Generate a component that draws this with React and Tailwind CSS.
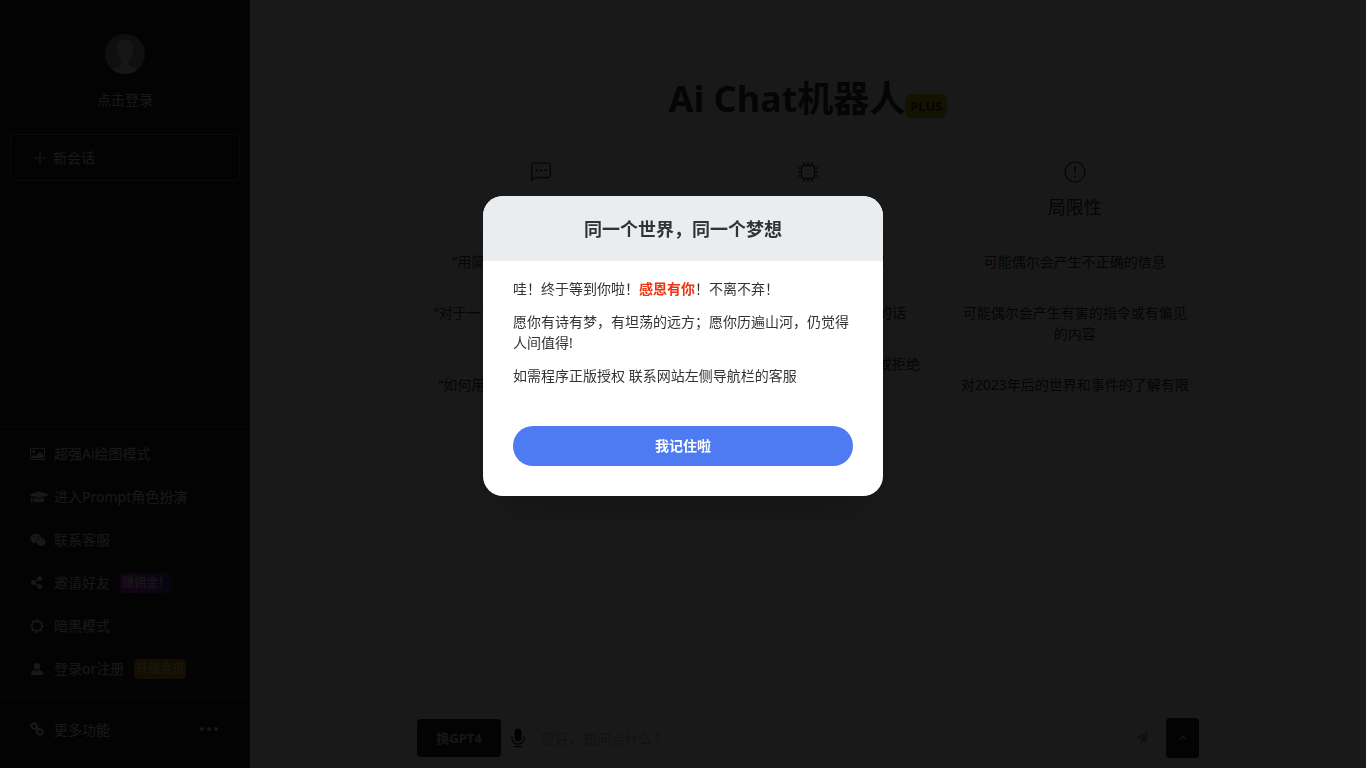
import React from "react";
import { FaGraduationCap, FaWeixin, FaShareAlt } from "react-icons/fa";

function PlusIcon() {
  return (
    <svg className="size-3 shrink-0" viewBox="0 0 12 12" fill="none" stroke="currentColor" aria-hidden="true">
      <path d="M6 0v12M0 6h12" strokeWidth="1.2" />
    </svg>
  );
}

function PictureIcon() {
  return (
    <svg className="h-3 w-[15px]" viewBox="0 0 15 12" aria-hidden="true">
      <rect x="0.5" y="0.5" width="14" height="11" fill="none" stroke="currentColor" />
      <circle cx="3.8" cy="3.6" r="1.5" fill="currentColor" />
      <path d="M2 10V8.4l2.2-1.9 1.8 1.4L10 3.6l3 3V10z" fill="currentColor" />
    </svg>
  );
}

function SunIcon() {
  return (
    <svg className="size-3.5" viewBox="0 0 14 14" fill="none" stroke="currentColor" aria-hidden="true">
      <circle cx="7" cy="7" r="4.9" strokeWidth="1.6" />
      <circle cx="7" cy="7" r="6.2" strokeWidth="1.6" strokeDasharray="1.800 3.070" strokeDashoffset="0.900" />
    </svg>
  );
}

function UserIcon() {
  return (
    <svg className="h-3 w-3.5" viewBox="0 0 14 12" fill="currentColor" aria-hidden="true">
      <circle cx="7" cy="3.2" r="3.1" />
      <path d="M1 12c0-3 1.4-4.8 3.8-5.5L7 8.6l2.2-2.1C11.6 7.2 13 9 13 12z" />
    </svg>
  );
}

function LinkIcon() {
  return (
    <svg className="size-3.5" viewBox="0 0 14 14" fill="none" stroke="currentColor" strokeWidth="2" aria-hidden="true">
      <rect x="1.2" y="1.7" width="6" height="4.8" rx="2.4" transform="rotate(45 4.2 4.1)" />
      <rect x="6.8" y="7.5" width="6" height="4.8" rx="2.4" transform="rotate(45 9.8 9.9)" />
      <path d="M5.3 5.3l3.4 3.4" />
    </svg>
  );
}

function DotsIcon() {
  return (
    <svg className="h-1 w-[18px]" viewBox="0 0 18 4" fill="currentColor" aria-hidden="true">
      <circle cx="2" cy="2" r="2" />
      <circle cx="9" cy="2" r="2" />
      <circle cx="16" cy="2" r="2" />
    </svg>
  );
}

function ChatIcon() {
  return (
    <svg className="size-5" viewBox="0 0 20 20" fill="none" stroke="currentColor" strokeWidth="1.3" aria-hidden="true">
      <path d="M0.7 18.5V3.200a2 2 0 0 1 2-2h14.600a2 2 0 0 1 2 2v10.300a2 2 0 0 1-2 2H4z" strokeLinejoin="round" />
      <g fill="currentColor" stroke="none">
        <circle cx="5.5" cy="8.300" r="1.2" />
        <circle cx="10" cy="8.300" r="1.2" />
        <circle cx="14.5" cy="8.300" r="1.2" />
      </g>
    </svg>
  );
}

function ChipIcon() {
  return (
    <svg className="size-[22px]" viewBox="0 0 22 22" fill="none" stroke="currentColor" strokeWidth="1.3" aria-hidden="true">
      <rect x="4.5" y="4.5" width="13" height="13" rx="1.5" />
      <path d="M7 4.500V1M11 4.500V1M15 4.500V1M7 21v-3.500M11 21v-3.500M15 21v-3.500M4.500 7H1M4.500 11H1M4.500 15H1M21 7h-3.500M21 11h-3.500M21 15h-3.500" />
    </svg>
  );
}

function AlertIcon() {
  return (
    <svg className="size-[22px]" viewBox="0 0 22 22" fill="none" stroke="currentColor" strokeWidth="1.2" aria-hidden="true">
      <circle cx="11" cy="11" r="10" />
      <path d="M11 5v7.500M11 14.800v1.700" strokeWidth="1.5" />
    </svg>
  );
}

function MicIcon() {
  return (
    <svg className="h-5 w-3.5" viewBox="0 0 14 20" fill="none" stroke="currentColor" aria-hidden="true">
      <rect x="3.5" y="0.5" width="7" height="13" rx="3.5" fill="currentColor" stroke="none" />
      <path d="M0.900 8.500v2a6.100 5.600 0 0 0 12.200 0v-2M7 16v2.500M3 18.600h8" strokeWidth="1.3" />
    </svg>
  );
}

function SendIcon() {
  return (
    <svg className="size-3" viewBox="0 0 12 12" fill="currentColor" aria-hidden="true">
      <path d="M12 0L0 5.500l3.300 1.600L10 2 4.500 8v4l2.200-2.800L10 10.500z" />
    </svg>
  );
}

function Avatar() {
  return (
    <svg className="size-10 rounded-full" viewBox="0 0 40 40" aria-hidden="true">
      <rect width="40" height="40" fill="#999" />
      <path
        d="M20 6c-5 0-8 2.500-8 8 0 1-.3 2-.1 3.500.2 1.500 1 2 1.200 3.200.4 2.300 1.500 4 3 5.500.5 2.500.4 4.500-.6 5.500-1.500 1.500-5.500 1.500-7.500 3V40h24v-5.300c-2-1.500-6-1.500-7.500-3-1-1-1.100-3-.6-5.500 1.500-1.500 2.600-3.200 3-5.500.2-1.200 1-1.700 1.200-3.200.2-1.500-.1-2.500-.1-3.500 0-5.500-3-8-8-8z"
        fill="#ddd"
      />
    </svg>
  );
}

const menu = [
  { label: "超强Ai绘图模式", icon: <PictureIcon /> },
  { label: "进入Prompt角色扮演", icon: <FaGraduationCap className="size-[18px]" /> },
  { label: "联系客服", icon: <FaWeixin className="size-4" /> },
  { label: "邀请好友", icon: <FaShareAlt className="size-[13px]" />, badge: "赚佣金！", badgeClass: "bg-linear-to-r from-[#e000e0] to-[#3030a0]" },
  { label: "暗黑模式", icon: <SunIcon /> },
  { label: "登录or注册", icon: <UserIcon />, badge: "升级会员", badgeClass: "bg-[#c8900c]" },
];

const columns = [
  {
    title: "示例",
    icon: <ChatIcon />,
    items: ["“用简单的术语解释量子力学”", "“对于一个十岁孩子的生日，你能给\n什么创意呢？”", "“如何用代码来发出网络请求呢？”"],
  },
  {
    title: "能力",
    icon: <ChipIcon />,
    items: ["可以记住上文的聊天内容", "记住用户在之前对话中说过的话", "受过训练会对不当的请求更正或拒绝"],
  },
  {
    title: "局限性",
    icon: <AlertIcon />,
    items: ["可能偶尔会产生不正确的信息", "可能偶尔会产生有害的指令或有偏见的内容", "对2023年后的世界和事件的了解有限"],
  },
];

function Sidebar() {
  return (
    <aside className="flex w-[250px] shrink-0 flex-col bg-[#202123] text-[#eee]">
      <a href="#login" className="flex flex-col items-center gap-[15px] pt-[34px]">
        <Avatar />
        <span>点击登录</span>
      </a>
      <button className="mx-2.5 mt-6 flex h-[47px] items-center gap-[7px] rounded border border-white/30 px-[23px]">
        <PlusIcon />
        新会话
      </button>
      <nav className="mt-auto border-y border-white/20 pt-[5px] pb-1.5">
        {menu.map((item) => (
          <a key={item.label} href="#menu" className="flex h-[43px] items-center pl-[30px]">
            <span className="flex w-6 shrink-0">{item.icon}</span>
            {item.label}
            {item.badge && (
              <span className={"ml-2.5 w-[52px] rounded py-px pl-0.5 text-xs leading-[18px] " + item.badgeClass}>{item.badge}</span>
            )}
          </a>
        ))}
      </nav>
      <button className="mb-[7px] flex h-16 items-center pr-8 pl-[30px]">
        <span className="flex w-6">
          <LinkIcon />
        </span>
        更多功能
        <span className="ml-auto">
          <DotsIcon />
        </span>
      </button>
    </aside>
  );
}

function Chat() {
  return (
    <main className="flex min-w-0 flex-1 flex-col items-center bg-white text-[#333]">
      <h1 className="mt-[72px] flex items-end text-4xl leading-[54px] font-bold">
        Ai Chat机器人
        <span className="mb-2 rounded-md bg-[#c8b820] px-[5px] text-[13px] leading-6">PLUS</span>
      </h1>
      <div className="mt-[34px] grid w-full max-w-[800px] grid-cols-3">
        {columns.map((column) => (
          <section key={column.title} className="flex flex-col items-center px-4 text-center">
            <span className="flex h-6 items-center">{column.icon}</span>
            <h2 className="mt-2.5 text-lg leading-[27px]">{column.title}</h2>
            <ul className="mt-[30px] flex flex-col gap-[30px]">
              {column.items.map((text) => (
                <li key={text} className="whitespace-pre-line">
                  {text}
                </li>
              ))}
            </ul>
          </section>
        ))}
      </div>
      <form className="mt-auto mb-2.5 flex w-full max-w-[782px] items-center" onSubmit={(e) => e.preventDefault()}>
        <button type="button" className="h-[38px] w-[84px] rounded bg-[#222] text-[13px] font-bold text-[#ddd]">
          换GPT4
        </button>
        <button type="button" aria-label="语音" className="mr-2 ml-2.5 text-[#111]">
          <MicIcon />
        </button>
        <div className="flex h-[38px] flex-1 items-center rounded border border-[#e6e6e6] pr-2.5 pl-[7px]">
          <input aria-label="提问" placeholder="您好，想问点什么？" className="min-w-0 flex-1 outline-none placeholder:text-[#aaa]" />
          <button type="submit" aria-label="发送" className="text-[#999]">
            <SendIcon />
          </button>
        </div>
        <button type="button" aria-label="展开" className="ml-[7px] flex h-10 w-[33px] items-center justify-center rounded bg-[#222] text-[#ddd]">
          <svg className="h-1.5 w-2" viewBox="0 0 8 6" fill="none" stroke="currentColor" strokeWidth="1.2" aria-hidden="true">
            <path d="M1 4.500l3-3 3 3" />
          </svg>
        </button>
      </form>
    </main>
  );
}

function Notice() {
  return (
    <div className="fixed inset-0 flex items-center justify-center bg-black/90 pb-[76px]">
      <div role="dialog" aria-modal="true" aria-labelledby="notice-title" className="w-[400px] overflow-hidden rounded-[20px] bg-white text-[#333] shadow-2xl">
        <h2 id="notice-title" className="bg-[#e9edf0] pt-0.5 text-center text-lg leading-[63px] font-bold">
          同一个世界，同一个梦想
        </h2>
        <div className="px-[30px] pt-[17px] pb-[30px]">
          <div className="flex flex-col gap-3">
            <p>
              哇！终于等到你啦！<b className="text-[#ee3311]">感恩有你</b>！不离不弃！
            </p>
            <p>愿你有诗有梦，有坦荡的远方；愿你历遍山河，仍觉得人间值得!</p>
            <p>如需程序正版授权 联系网站左侧导航栏的客服</p>
          </div>
          <button className="mt-10 h-10 w-full rounded-full bg-[#4e7bf2] pb-0.5 font-bold text-white">我记住啦</button>
        </div>
      </div>
    </div>
  );
}

export default function App() {
  return (
    <div className="flex min-h-screen font-['Noto_Sans','Noto_Sans_CJK_SC',sans-serif] text-sm leading-[21px]">
      <Sidebar />
      <Chat />
      <Notice />
    </div>
  );
}
